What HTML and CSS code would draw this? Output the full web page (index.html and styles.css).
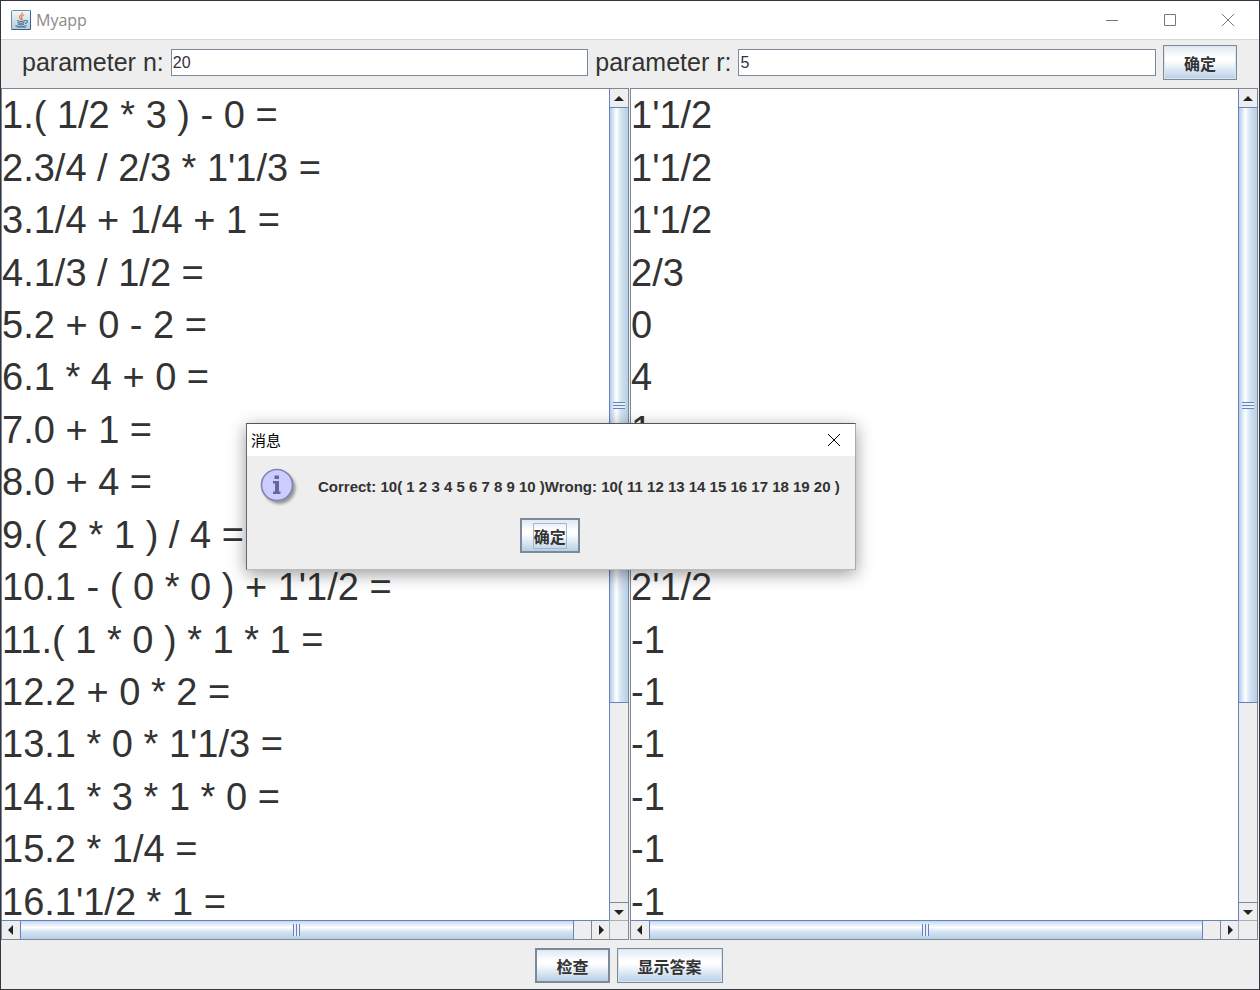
FILE: index.html
```html
<!DOCTYPE html>
<html lang="zh-CN">
<head>
<meta charset="utf-8">
<title>Myapp</title>
<link rel="stylesheet" href="styles.css">
</head>
<body>
<div class="window">
  <header class="titlebar">
    <svg class="app-icon" viewBox="0 0 20 20" aria-hidden="true">
      <defs><linearGradient id="cup" x1="0" y1="0" x2="0" y2="1"><stop offset="0" stop-color="#f4f7f9"/><stop offset="1" stop-color="#b4cbdc"/></linearGradient></defs>
      <rect x=".5" y=".5" width="19" height="19" rx="1" fill="url(#cup)" stroke="#6c8ba3"/>
      <path d="M.5 19.5h19v-19" fill="none" stroke="#3b6283"/>
      <path d="M11.500 2.500c1 2-4 3-3 5 .4 1 1.500 1.500 1.500 2.500M13 5c-3 1.200-3 2.200-2 3.500.5.700.3 1.500-.5 2" fill="none" stroke="#e08b4a" stroke-width="1.300"/>
      <path d="M6 10.500c2 1 6 1 8.500 0M6.500 12.500c2 .9 5 .9 7 0M7 14.300c2 .8 4 .8 6 0M14.500 10.500c3-.5 2.500 2.500-.5 3M4.500 15.500c3 1.500 8 1.500 11 0" fill="none" stroke="#4c7595" stroke-width="1.100"/>
      <path d="M6 17.500h9" stroke="#7fa0b8"/>
    </svg>
    <h1 class="app-title">Myapp</h1>
    <div class="window-controls">
      <button class="window-button" aria-label="Minimize"><svg viewBox="0 0 14 14"><path d="M1 7.500h12"/></svg></button>
      <button class="window-button" aria-label="Maximize"><svg viewBox="0 0 14 14"><path d="M1.500 1.500h11v11h-11z"/></svg></button>
      <button class="window-button" aria-label="Close"><svg viewBox="0 0 14 14"><path d="M1 1l12 12M13 1L1 13"/></svg></button>
    </div>
  </header>

  <form class="toolbar" onsubmit="return false">
    <label class="param-label" for="n">parameter n:</label>
    <input class="param-input" id="n" type="text" value="20">
    <label class="param-label" for="r">parameter r:</label>
    <input class="param-input" id="r" type="text" value="5">
    <button class="button" type="button">确定</button>
  </form>

  <main class="panes">
    <section class="pane" aria-label="Questions">
      <div class="pane-view">
        <ul class="lines">
          <li>1.( 1/2 * 3 ) - 0 =</li>
          <li>2.3/4 / 2/3 * 1'1/3 =</li>
          <li>3.1/4 + 1/4 + 1 =</li>
          <li>4.1/3 / 1/2 =</li>
          <li>5.2 + 0 - 2 =</li>
          <li>6.1 * 4 + 0 =</li>
          <li>7.0 + 1 =</li>
          <li>8.0 + 4 =</li>
          <li>9.( 2 * 1 ) / 4 =</li>
          <li>10.1 - ( 0 * 0 ) + 1'1/2 =</li>
          <li>11.( 1 * 0 ) * 1 * 1 =</li>
          <li>12.2 + 0 * 2 =</li>
          <li>13.1 * 0 * 1'1/3 =</li>
          <li>14.1 * 3 * 1 * 0 =</li>
          <li>15.2 * 1/4 =</li>
          <li>16.1'1/2 * 1 =</li>
        </ul>
      </div>
      <div class="scroll scroll-v">
        <button class="arrow" aria-label="Scroll up"><svg viewBox="0 0 12 12"><path d="M1 9h10L6 4z"/></svg></button>
        <div class="track"><div class="thumb"><span class="grip"></span></div></div>
        <button class="arrow" aria-label="Scroll down"><svg viewBox="0 0 12 12"><path d="M1 4h10L6 9z"/></svg></button>
      </div>
      <div class="scroll scroll-h">
        <button class="arrow" aria-label="Scroll left"><svg viewBox="0 0 12 12"><path d="M8 1v10L3 6z"/></svg></button>
        <div class="track"><div class="thumb"><span class="grip"></span></div></div>
        <button class="arrow" aria-label="Scroll right"><svg viewBox="0 0 12 12"><path d="M4 1v10l5-5z"/></svg></button>
      </div>
      <div class="corner"></div>
    </section>

    <section class="pane" aria-label="Answers">
      <div class="pane-view">
        <ul class="lines">
          <li>1'1/2</li>
          <li>1'1/2</li>
          <li>1'1/2</li>
          <li>2/3</li>
          <li>0</li>
          <li>4</li>
          <li>1</li>
          <li>4</li>
          <li>1/2</li>
          <li>2'1/2</li>
          <li>-1</li>
          <li>-1</li>
          <li>-1</li>
          <li>-1</li>
          <li>-1</li>
          <li>-1</li>
        </ul>
      </div>
      <div class="scroll scroll-v">
        <button class="arrow" aria-label="Scroll up"><svg viewBox="0 0 12 12"><path d="M1 9h10L6 4z"/></svg></button>
        <div class="track"><div class="thumb"><span class="grip"></span></div></div>
        <button class="arrow" aria-label="Scroll down"><svg viewBox="0 0 12 12"><path d="M1 4h10L6 9z"/></svg></button>
      </div>
      <div class="scroll scroll-h">
        <button class="arrow" aria-label="Scroll left"><svg viewBox="0 0 12 12"><path d="M8 1v10L3 6z"/></svg></button>
        <div class="track"><div class="thumb"><span class="grip"></span></div></div>
        <button class="arrow" aria-label="Scroll right"><svg viewBox="0 0 12 12"><path d="M4 1v10l5-5z"/></svg></button>
      </div>
      <div class="corner"></div>
    </section>
  </main>

  <footer class="actions">
    <button class="button button-default">检查</button>
    <button class="button">显示答案</button>
  </footer>
</div>

<div class="dialog" role="dialog" aria-labelledby="dialog-title">
  <div class="dialog-titlebar">
    <h2 class="dialog-title" id="dialog-title">消息</h2>
    <button class="dialog-close" aria-label="Close"><svg viewBox="0 0 14 14"><path d="M1 1l12 12M13 1L1 13"/></svg></button>
  </div>
  <div class="dialog-body">
    <div class="message">
      <svg class="info-icon" viewBox="0 0 40 40" aria-hidden="true">
        <defs><filter id="soft" x="-20%" y="-20%" width="140%" height="140%"><feGaussianBlur stdDeviation="1.500"/></filter></defs>
        <circle cx="19.500" cy="20" r="16" fill="#8f9a94" filter="url(#soft)"/>
        <circle cx="17" cy="17" r="15.500" fill="#ccccff" stroke="#8080b3" stroke-width="1.600"/>
        <path d="M14.500 7.500h4.500v3.500h-4.500zM13 13h6v10.500h1.500V26h-7.500v-2.500h2v-8h-2z" fill="#666699"/>
      </svg>
      <p class="message-text">Correct: 10( 1 2 3 4 5 6 7 8 9 10 )Wrong: 10( 11 12 13 14 15 16 17 18 19 20 )</p>
    </div>
    <button class="button button-default button-focus"><span class="focus-ring">确定</span></button>
  </div>
</div>
</body>
</html>
```
FILE: styles.css
```css
* {
  box-sizing: border-box;
}

body {
  margin: 0;
  color: #333;
  font-family: "Liberation Sans", "Noto Sans CJK SC", sans-serif;
}

button {
  margin: 0;
  padding: 0;
  border: 0;
  background: none;
  font-family: inherit;
  color: inherit;
}

svg {
  display: block;
}

.window {
  display: flex;
  flex-direction: column;
  height: 100vh;
  border: 1px solid #35353d;
  background: #eee;
}

/* Title bar */
.titlebar {
  display: flex;
  align-items: center;
  height: 39px;
  padding: 0 2px 0 10px;
  border-bottom: 1px solid #d4d8d8;
  background: #fff;
}

.app-icon {
  width: 20px;
  height: 20px;
}

.app-title {
  flex: 1;
  margin: 0 0 0 5px;
  color: #8a8a8a;
  font: 400 16px/20px "Open Sans", "Noto Sans", sans-serif;
}

.window-controls {
  display: flex;
}

.window-button {
  width: 58px;
  height: 38px;
  padding: 0 22px;
}

.window-button svg {
  width: 14px;
  height: 14px;
  fill: none;
  stroke: #777;
}

/* Parameters */
.toolbar {
  display: flex;
  align-items: center;
  gap: 7px;
  padding: 5px 22px 8px 21px;
}

.param-label {
  font-size: 25px;
  line-height: 35px;
}

.param-input {
  flex: 1;
  min-width: 0;
  height: 27px;
  margin: 0;
  padding: 0 1px;
  border: 1px solid #7a8a99;
  border-radius: 0;
  background: #fff;
  color: #333;
  font: 16px "Liberation Sans", sans-serif;
}

.button {
  height: 35px;
  padding: 0 20px;
  border: 1px solid #7a8a99;
  background: linear-gradient(#dfe9f4, #fff 35%, #fff 45%, #b8cfe5);
  box-shadow: inset 0 0 0 1px #dbe5f0;
  font-size: 16px;
  font-weight: 700;
}

.button-default {
  padding: 0 19px;
  border-width: 2px;
  box-shadow: none;
}

.button-focus {
  padding: 0 12px;
}

.focus-ring {
  display: block;
  outline: 1px solid #a3b8cc;
}

/* Text panes */
.panes {
  display: grid;
  grid-template-columns: 1fr 1fr;
  gap: 1px;
  flex: 1;
  min-height: 0;
  padding-right: 1px;
}

.pane {
  display: grid;
  grid-template: minmax(0, 1fr) 19px / minmax(0, 1fr) 19px;
  min-width: 0;
  min-height: 0;
  border: 1px solid #7a8a99;
}

.pane-view {
  overflow: hidden;
  background: #fff;
}

.lines {
  display: grid;
  grid-auto-rows: 1fr;
  align-items: center;
  height: calc(100% + 8px);
  margin: 0;
  padding: 0;
  list-style: none;
  font-size: 38px;
  line-height: 52px;
  white-space: nowrap;
}

.scroll {
  display: flex;
}

.scroll-v {
  flex-direction: column;
  border-left: 1px solid #6382bf;
}

.scroll-h {
  border-top: 1px solid #6382bf;
}

.arrow {
  display: grid;
  place-items: center;
  flex: none;
  width: 18px;
  height: 18px;
}

.arrow svg {
  width: 12px;
  height: 12px;
  fill: #222;
}

.scroll-v .arrow:last-child {
  border-top: 1px solid #7a8a99;
}

.scroll-h .arrow:last-child {
  border-left: 1px solid #7a8a99;
}

.track {
  flex: 1;
  min-width: 0;
  min-height: 0;
}

.thumb {
  display: grid;
  place-items: center;
}

.scroll-v .thumb {
  height: 75%;
  border: solid #6382bf;
  border-width: 1px 0;
  background: linear-gradient(90deg, #b5cbe8, #fff 35%, #d5e3f1 60%, #b8cfe5);
}

.scroll-h .thumb {
  width: 97%;
  height: 100%;
  border: solid #6382bf;
  border-width: 0 1px;
  background: linear-gradient(#c3d7ef, #fff 35%, #d5e3f1 60%, #b8cfe5);
}

.scroll-v .grip {
  width: 12px;
  height: 7px;
  background: repeating-linear-gradient(#6382bf 0 1px, #e8f0fa 1px 3px);
}

.scroll-h .grip {
  width: 7px;
  height: 12px;
  background: repeating-linear-gradient(90deg, #6382bf 0 1px, #e8f0fa 1px 3px);
}

.corner {
  border: solid #a5afb8;
  border-width: 1px 0 0 1px;
}

/* Bottom buttons */
.actions {
  display: flex;
  justify-content: center;
  gap: 7px;
  padding: 8px 2px 6px 0;
}

/* Message dialog */
.dialog {
  position: absolute;
  top: 423px;
  left: 246px;
  border: 1px solid #666;
  border-color: #555 #aaa #bbb #666;
  background: #eee;
  box-shadow: 0 4px 16px rgba(0, 0, 0, 0.4);
}

.dialog-titlebar {
  display: flex;
  align-items: center;
  justify-content: space-between;
  height: 32px;
  padding: 0 14px 0 4px;
  background: #fff;
}

.dialog-title {
  margin: 0;
  color: #000;
  font-family: "Noto Sans CJK SC", sans-serif;
  font-size: 15px;
  font-weight: 400;
  line-height: 32px;
}

.dialog-close svg {
  width: 14px;
  height: 14px;
  fill: none;
  stroke: #000;
}

.dialog-body {
  display: flex;
  flex-direction: column;
  align-items: center;
  gap: 10px;
  padding: 12px 15px 16px 13px;
}

.message {
  display: flex;
  gap: 18px;
}

.info-icon {
  width: 40px;
  height: 40px;
}

.message-text {
  margin: 8px 0 0;
  font-size: 15px;
  font-weight: 700;
  line-height: 22px;
  white-space: nowrap;
}
```
